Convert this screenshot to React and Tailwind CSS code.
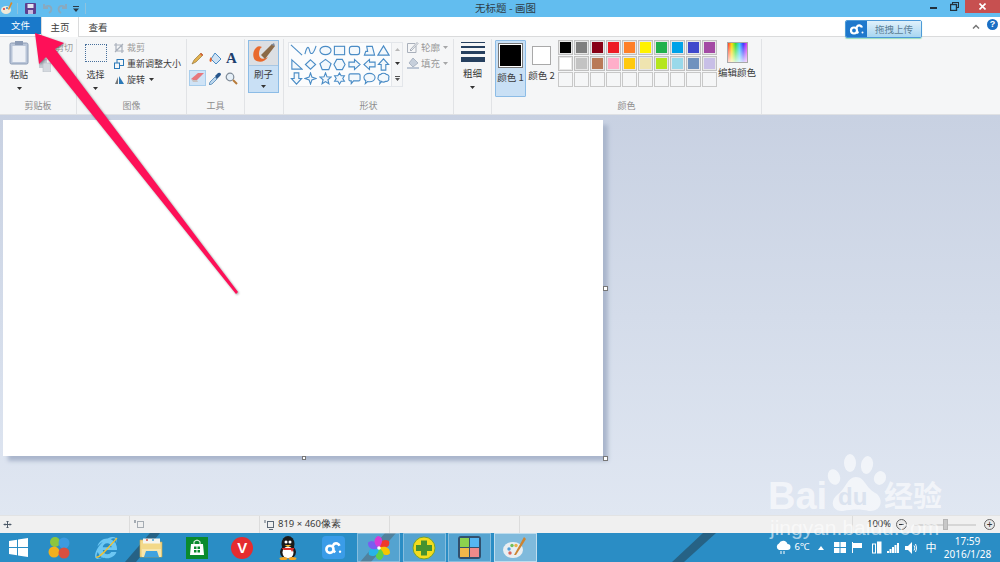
import React from "react";
import { FaInternetExplorer } from "react-icons/fa";

const S = "#4a8cc6";
const shapes = [
  <path d="M1 1L13 12" />,
  <path d="M1 11C3 2 5 2 6 7S10 12 13 2" />,
  <ellipse cx="7" cy="7" rx="6" ry="4.5" />,
  <rect x="1.5" y="2.5" width="11" height="9" />,
  <rect x="1.5" y="2.5" width="11" height="9" rx="2.5" />,
  <path d="M4 2.5H10L12.5 12H1.5L3 8H5Z" />,
  <path d="M7 2L13 12H1Z" />,
  <path d="M2 2L13 12H2Z" />,
  <path d="M7 2L12.5 7L7 12L1.5 7Z" />,
  <path d="M7 1.5L13 6L10.5 12.5H3.5L1 6Z" />,
  <path d="M4 1.5H10L13 7L10 12.5H4L1 7Z" />,
  <path d="M1 4.5H7V1.5L13 7L7 12.5V9.5H1Z" />,
  <path d="M13 4.5H7V1.5L1 7L7 12.5V9.5H13Z" />,
  <path d="M4.5 13V7H1.5L7 1L12.5 7H9.5V13Z" />,
  <path d="M4.5 1V7H1.5L7 13L12.5 7H9.5V1Z" />,
  <path d="M7 1L8.5 5.5L13 7L8.5 8.5L7 13L5.5 8.5L1 7L5.5 5.5Z" />,
  <path d="M7 1L8.6 5.2L13 5.5L9.6 8.3L10.7 12.7L7 10.3L3.3 12.7L4.4 8.3L1 5.5L5.4 5.2Z" />,
  <path d="M7 1L8.8 4H12.3L10.5 7L12.3 10H8.8L7 13L5.2 10H1.7L3.5 7L1.7 4H5.2Z" />,
  <path d="M2.5 2H11.5Q13 2 13 3.5V8Q13 9.5 11.5 9.5H6L3.5 12.5V9.5H2.5Q1 9.5 1 8V3.5Q1 2 2.5 2Z" />,
  <path d="M7 1.5C10.5 1.5 13 3.5 13 6S10.5 10.500 7 10.500Q6 10.500 5 10.300L2.500 12.500L3 9.500C1.800 8.700 1 7.500 1 6C1 3.500 3.500 1.500 7 1.500Z" />,
  <path d="M4 2.500C5 1 9 1 10 2.500C12.500 2.500 13.500 5 12.500 6.500C13.500 9 11 10.500 9.500 10C8 11 6 11 5 10L3 12.500L3.300 9.500C1 9 .500 6.500 1.500 5.500C1 3.500 3 2.500 4 2.500Z" />,
];
const colorsA = ["#000000", "#7f7f7f", "#880015", "#ed1c24", "#ff7f27", "#fff200", "#22b14c", "#00a2e8", "#3f48cc", "#a349a4"];
const colorsB = ["#ffffff", "#c3c3c3", "#b97a57", "#ffaec9", "#ffc90e", "#efe4b0", "#b5e61d", "#99d9ea", "#7092be", "#c8bfe7"];

const Caret = ({ c = "mx-auto" }) => (
  <svg width="5" height="3" viewBox="0 0 5 3" className={c}><path d="M0 0H5L2.500 3Z" fill="#333" /></svg>
);

const Group = ({ w, label, children }) => (
  <div className={`${w} flex flex-col border-r border-[#e1e3e6] shrink-0 h-full`}>
    <div className="flex-1 min-h-0 flex">{children}</div>
    <div className="h-[14px] leading-[14px] text-center text-[9px] text-[#8d8d8d] mb-[1px]">{label}</div>
  </div>
);

const Swatch = ({ c }) => (
  <div className="w-[15px] h-[15px] border border-[#c0c0c0] p-[1px] bg-[#e7e7e7]">
    <div className="w-full h-full" style={{ background: c }} />
  </div>
);

const LinkLogo = ({ size = 16, color = "#fff" }) => (
  <svg width={size} height={size} viewBox="0 0 16 16" fill="none" stroke={color} strokeWidth="2.200">
    <circle cx="5" cy="9.500" r="3" />
    <path d="M7 7.500L8.500 5A3 3 0 0 1 13 6.500" />
    <path d="M7.500 10.500L9.500 12" />
    <circle cx="13.500" cy="11.500" r="1" fill={color} stroke="none" />
  </svg>
);

const Wheel = ({ size = 24 }) => {
  const c = ["#f0392b", "#f7c600", "#5ed04a", "#27b5e8", "#7b5cf0", "#d63bd6"];
  return (
    <svg width={size} height={size} viewBox="-12 -12 24 24">
      {c.map((f, i) => (
        <path key={f} transform={`rotate(${i * 60 + 20})`} d="M0 0C-2 -6 1 -11 7 -10C10 -6 8 -2 0 0Z" fill={f} />
      ))}
      <circle r="1.800" fill="#fff" />
    </svg>
  );
};

const Slot = ({ w = "w-[45.5px]", cls = "", children }) => (
  <div className={`${w} ${cls} h-full shrink-0 flex items-center justify-center`}>
    {children}
  </div>
);

const RUN = "bg-white/20 border border-white/30";

export default function App() {
  return (
    <div className="relative w-[1000px] h-[562px] overflow-hidden flex flex-col bg-white text-[#3b3b3b] font-['Noto_Sans_CJK_SC','Noto_Sans',sans-serif]">
      {/* Title bar */}
      <div className="h-[17px] bg-[#62bdef] flex items-start shrink-0 relative">
        <div className="w-[12px] h-[13px] ml-[1px] mt-[2px]">
          <svg width="12" height="13" viewBox="0 0 12 13"><ellipse cx="5" cy="8" rx="5" ry="4" fill="#efe9d8" /><circle cx="3" cy="7" r="1" fill="#d33" /><circle cx="6" cy="6" r="1" fill="#38c" /><path d="M10 0L11.500 1L8 8L7 7Z" fill="#d98a2a" /></svg>
        </div>
        <div className="w-px h-[11px] bg-[#8fc3de] ml-[4px] mt-[3px]" />
        <svg width="11" height="11" viewBox="0 0 11 11" className="ml-[7px] mt-[3px]"><rect width="11" height="11" rx="1" fill="#5d3f8e" /><rect x="2.500" y="1" width="6" height="4" fill="#e4e4f0" /><rect x="3" y="7" width="5" height="4" fill="#c7b9de" /></svg>
        <svg width="11" height="11" viewBox="0 0 11 11" fill="none" stroke="#8aa9bd" strokeWidth="1.800" className="ml-[6px] mt-[3px]"><path d="M2 1V5H6M2 5C4 2 9 2 9.500 6C9.500 8 8.500 9 7 10" /></svg>
        <svg width="11" height="11" viewBox="0 0 11 11" fill="none" stroke="#8aa9bd" strokeWidth="1.800" className="ml-[4px] mt-[3px]"><path d="M9 1V5H5M9 5C7 2 2 2 1.500 6C1.500 8 2.500 9 4 10" /></svg>
        <svg width="6" height="6" viewBox="0 0 6 6" className="ml-[5px] mt-[6px]"><path d="M0 0H6V1H0ZM0 2.500H6L3 6Z" fill="#2b3a46" /></svg>
        <div className="w-px h-[11px] bg-[#8fc3de] ml-[6px] mt-[3px]" />
        <div className="w-[401px] text-center text-[10.500px] leading-[16px] text-[#2f3c46] ml-[219px]">无标题 - 画图</div>
        <div className="ml-auto flex items-start h-[13px]">
          <div className="w-[7px] h-[2px] bg-[#22313c] mt-[7px] mr-[13px]" />
          <svg width="9" height="9" viewBox="0 0 9 9" fill="none" stroke="#22313c" className="mt-[2px] mr-[6px]"><rect x="2.500" y=".5" width="6" height="5" /><rect x=".5" y="2.500" width="6" height="6" fill="#62bdef" strokeWidth="1.400" /></svg>
          <div className="w-[35px] h-[13px] bg-[#c75050] flex items-center justify-center">
            <svg width="7" height="7" viewBox="0 0 7 7" stroke="#fff" strokeWidth="1.600"><path d="M.5 .5L6.500 6.500M6.500 .5L.5 6.500" /></svg>
          </div>
        </div>
      </div>

      {/* Tabs */}
      <div className="h-[20px] bg-white flex items-start border-b border-[#dadbdc] shrink-0 relative">
        <div className="w-[41px] h-[17px] bg-[#1979ca] text-white text-[9.500px] leading-[17px] text-center">文件</div>
        <div className="w-[38px] h-[20px] border-x border-[#dadbdc] text-[9.500px] leading-[20px] text-center bg-white">主页</div>
        <div className="w-[38px] text-[9.500px] leading-[20px] text-center">查看</div>
        <div className="ml-[728px] mt-[3px] w-[77px] h-[18px] rounded-[2px] border border-[#4d9ad8] flex overflow-hidden relative z-10 shadow-[0_1px_1px_#9db]">
          <div className="w-[21px] bg-[#1e78cc] flex items-center justify-center"><LinkLogo size={16} /></div>
          <div className="flex-1 bg-gradient-to-b from-[#e0f1fb] to-[#a9d6f1] text-[9.500px] leading-[16px] text-center text-[#5c7f96]">拖拽上传</div>
        </div>
        <svg width="8" height="5" viewBox="0 0 8 5" fill="none" stroke="#777" strokeWidth="1.500" className="ml-[50px] mt-[7px]"><path d="M1 4.500L4 1.500L7 4.500" /></svg>
        <div className="ml-[7px] mt-[2px] w-[11px] h-[11px] rounded-full bg-[#1a6fc4] text-white text-[9px] font-bold leading-[11px] text-center font-['Liberation_Sans',sans-serif]">?</div>
      </div>

      {/* Ribbon */}
      <div className="h-[78px] bg-[#f5f6f7] flex shrink-0 text-[9px] pt-[2px] border-b border-[#dfe1e4]">
        <Group w="w-[77px]" label="剪贴板">
          <div className="w-[38px] flex flex-col items-center">
            <svg width="20" height="24" viewBox="0 0 20 24" className="mt-[2px]"><rect x="1" y="2" width="18" height="21" rx="1.500" fill="#b9c5d8" stroke="#8c9cb6" /><rect x="3.500" y="5" width="13" height="16" fill="#eef1f6" /><rect x="6" y="0" width="8" height="4" fill="#8c9cb6" /></svg>
            <div className="mt-[3px] leading-[13px]">粘贴</div>
            <div className="mt-[6px]"><Caret /></div>
          </div>
          <div className="flex flex-col pl-[1px]">
            <div className="text-[#9a9a9a] pl-[16px] pt-[2px] leading-[13px]">剪切</div>
            <svg width="12" height="13" viewBox="0 0 12 13" className="mt-[5px] ml-[0px]"><rect x="0" y="0" width="8" height="9" fill="#c6ccd4" /><rect x="4" y="4" width="8" height="9" fill="#d4d9df" stroke="#b7bec7" strokeWidth=".6" /></svg>
          </div>
        </Group>
        <Group w="w-[110px]" label="图像">
          <div className="w-[37px] flex flex-col items-center">
            <div className="w-[22px] h-[18px] border border-dotted border-[#47709c] mt-[5px]" />
            <div className="mt-[6px] leading-[13px]">选择</div>
            <div className="mt-[6px]"><Caret /></div>
          </div>
          <div className="flex flex-col gap-[3px] pt-[2px] leading-[13px]">
            <div className="flex items-center gap-[3px] text-[#9a9a9a]"><svg width="10" height="10" viewBox="0 0 10 10" fill="none" stroke="#a9b0bb" strokeWidth="1.200"><path d="M2 0V8H10M0 2H8V10M1 9L9 1" /></svg>裁剪</div>
            <div className="flex items-center gap-[3px]"><svg width="10" height="10" viewBox="0 0 10 10" fill="none" stroke="#2b79b8"><rect x="3" y=".5" width="6.500" height="6" /><rect x=".5" y="4" width="5" height="5.500" fill="#f5f6f7" /></svg>重新调整大小</div>
            <div className="flex items-center gap-[3px]"><svg width="10" height="10" viewBox="0 0 10 10"><path d="M1 9L4 2V9Z" fill="#777" /><path d="M5 1L10 9H5Z" fill="#2b79b8" /></svg>旋转<Caret c="ml-[1px]" /></div>
          </div>
        </Group>
        <Group w="w-[58px]" label="工具">
          <div className="grid grid-cols-3 grid-rows-2 w-[51px] h-[40px] ml-[2px] mt-[9px] place-items-center">
            <svg width="13" height="13" viewBox="0 0 13 13"><path d="M1 12L3 8L10 1L12 3L5 10Z" fill="#e2b14e" stroke="#8a6a2f" strokeWidth=".6" /><path d="M10 1L12 3L11 4L9 2Z" fill="#d85a3a" /></svg>
            <svg width="14" height="13" viewBox="0 0 14 13"><path d="M7 1L13 7L8 12L3 7Z" fill="#cfe2f3" stroke="#4a8cc6" /><path d="M3 5C1 7 1 10 3 10C4 9 4 7 3 5Z" fill="#e8632a" /></svg>
            <div className="text-[15px] leading-[15px] font-bold text-[#1d3f6e] font-['Liberation_Serif',serif]">A</div>
            <div className="w-[17px] h-[16px] bg-[#cfe3f6] border border-[#a7cdec] flex items-center justify-center"><svg width="13" height="10" viewBox="0 0 13 10"><path d="M0 6L7 0H13L6 7H2Z" fill="#e7777d" /><path d="M0 6L2 9H7L6 7H2Z" fill="#c9c2c2" /></svg></div>
            <svg width="12" height="13" viewBox="0 0 12 13"><path d="M0 13L1 10L6 5L8 7L3 12Z" fill="#bcd7ee" stroke="#3f78ad" strokeWidth=".7" /><path d="M6 4L9 1Q11 0 12 2Q12 3 11 4L8 7Z" fill="#27568c" /></svg>
            <svg width="13" height="13" viewBox="0 0 13 13" fill="none"><circle cx="5" cy="5" r="3.800" stroke="#7f8b98" strokeWidth="1.200" fill="#e6f0f8" /><path d="M8 8L12 12" stroke="#b77b3a" strokeWidth="2" /></svg>
          </div>
        </Group>
        <div className="w-[39px] border-r border-[#e1e3e6] shrink-0 h-full pl-[3px] pt-[1px]">
          <div className="w-[31px] h-[53px] border border-[#8cbce6] bg-[#c9e0f5] flex flex-col items-center">
            <div className="w-[29px] h-[25px] bg-[#dcdfe3] border-b border-[#a9c7e2] flex items-center justify-center">
              <svg width="25" height="22" viewBox="0 0 25 22"><path d="M6 5C2 8 1 14 4 18C8 21 14 20 17 15C12 18 8 17 8 12C8 9 9 6 11 5C9 4 7 4 6 5Z" fill="#e9692c" /><path d="M10 13L21 2L24 4L14 17Z" fill="#8b6a47" /><path d="M20 3L23 1L24 4Z" fill="#7d8ba0" /></svg>
            </div>
            <div className="leading-[13px] mt-[2px] text-[9.500px]">刷子</div>
            <div className="mt-[4px]"><Caret /></div>
          </div>
        </div>
        <Group w="w-[170px]" label="形状">
          <div className="flex ml-[4px] mt-[3px] h-[45px]">
            <div className="w-[104px] bg-[#fbfcfd] border border-[#e3e6ea] grid grid-cols-7 grid-rows-3 place-items-center">
              {shapes.map((s, i) => (
                <svg key={i} width="13" height="13" viewBox="0 0 14 14" fill="#f3f8fc" stroke={S} strokeWidth="1.200">{s}</svg>
              ))}
            </div>
            <div className="w-[11px] border-y border-r border-[#e3e6ea] flex flex-col items-center justify-around">
              <svg width="5" height="3" viewBox="0 0 5 3"><path d="M0 3H5L2.500 0Z" fill="#b9b9b9" /></svg>
              <Caret />
              <svg width="5" height="5" viewBox="0 0 5 5"><path d="M0 0H5V1H0ZM0 2H5L2.500 5Z" fill="#555" /></svg>
            </div>
          </div>
          <div className="flex flex-col gap-[2px] ml-[4px] mt-[1px] text-[#9a9a9a] leading-[14px] text-[9.500px]">
            <div className="flex items-center gap-[2px]"><svg width="12" height="12" viewBox="0 0 12 12" fill="none" stroke="#a9b0bb"><path d="M.5 2.500H8M.5 2.500V11.500H9V5M3 9L10 1.500L11 2.500L4 10Z" /></svg>轮廓<Caret c="ml-[1px] opacity-40" /></div>
            <div className="flex items-center gap-[2px]"><svg width="12" height="12" viewBox="0 0 12 12"><path d="M6 1L11 6L6 10L2 6Z" fill="#c6cfdb" stroke="#98a4b4" strokeWidth=".7" /><rect y="10" width="12" height="2" fill="#bcc6d4" /></svg>填充<Caret c="ml-[1px] opacity-40" /></div>
          </div>
        </Group>
        <Group w="w-[38px]" label="">
          <div className="w-full flex flex-col items-center pt-[3px]">
            <div className="w-[24px] h-[1px] bg-[#26405f]" />
            <div className="w-[24px] h-[2px] bg-[#26405f] mt-[3px]" />
            <div className="w-[24px] h-[3px] bg-[#26405f] mt-[3px]" />
            <div className="w-[24px] h-[5px] bg-[#26405f] mt-[3px]" />
            <div className="leading-[13px] mt-[5px] text-[9.500px]">粗细</div>
            <div className="mt-[6px]"><Caret /></div>
          </div>
        </Group>
        <Group w="w-[270px]" label="颜色">
          <div className="w-[31px] h-[57px] ml-[3px] mt-[1px] bg-[#c9e0f5] border border-[#8cbce6] rounded-[1px] flex flex-col items-center pt-[2px] shrink-0">
            <div className="w-[25px] h-[25px] border border-[#777] p-[1px] bg-white"><div className="w-full h-full bg-black" /></div>
            <div className="whitespace-nowrap leading-[13px] mt-[3px] text-[9.500px]">颜色 1</div>
          </div>
          <div className="w-[31px] flex flex-col items-center pt-[7px] shrink-0">
            <div className="w-[19px] h-[19px] border border-[#a9a9a9] bg-white" />
            <div className="whitespace-nowrap leading-[13px] mt-[4px] text-[9.500px]">颜色 2</div>
          </div>
          <div className="grid grid-cols-[repeat(10,15px)] auto-rows-[15px] gap-[1px] mt-[1px] ml-[1px] shrink-0">
            {colorsA.map((c) => <Swatch key={c} c={c} />)}
            {colorsB.map((c) => <Swatch key={c} c={c} />)}
            {Array.from({ length: 10 }).map((_, i) => (
              <div key={i} className="w-[15px] h-[15px] border border-[#c8c8c8] bg-[#f5f6f7]" />
            ))}
          </div>
          <div className="flex-1 flex flex-col items-center pt-[3px] pr-[4px]">
            <div className="w-[21px] h-[21px] border border-[#a9a9a9] bg-[linear-gradient(to_bottom,transparent,#ffffffcc),linear-gradient(to_right,#f33,#fd0,#3d3,#3cf,#33f,#e3e)]" />
            <div className="whitespace-nowrap leading-[13px] mt-[3px] text-[9.500px]">编辑颜色</div>
          </div>
        </Group>
      </div>

      {/* Canvas area */}
      <div className="flex-1 min-h-0 bg-gradient-to-b from-[#c8d1e2] to-[#e0e7f2] pl-[3px] pt-[5px] relative">
        <div className="relative w-[600px] h-[336px] bg-white shadow-[5px_5px_4px_#aab6cc]">
          <div className="absolute left-[600px] top-[166px] w-[5px] h-[5px] border border-[#777] bg-white" />
          <div className="absolute left-[299px] top-[336px] w-[4px] h-[4px] border border-[#777] bg-white" />
          <div className="absolute left-[600px] top-[336px] w-[5px] h-[5px] border border-[#777] bg-white" />
        </div>
      </div>

      {/* Status bar */}
      <div className="h-[18px] bg-[#f0f0f0] border-t border-[#e2e3e4] flex items-center shrink-0 text-[9.500px] font-['Noto_Sans',sans-serif]">
        <div className="w-[130px] h-full border-r border-[#dcdcdc] pl-[3px] flex items-center"><svg width="9" height="9" viewBox="0 0 9 9" fill="none" stroke="#4d5a68"><path d="M4.500 1V8M1 4.500H8M3.500 2L4.500 1L5.500 2M3.500 7L4.500 8L5.500 7M2 3.500L1 4.500L2 5.500M7 3.500L8 4.500L7 5.500" /></svg></div>
        <div className="w-[130px] h-full border-r border-[#dcdcdc] pl-[4px] flex items-center"><svg width="11" height="10" viewBox="0 0 11 10" fill="none" stroke="#5b6876"><path d="M1 0V3" /><rect x="3.500" y="1.500" width="6" height="6" strokeDasharray="1 1" /></svg></div>
        <div className="w-[130px] h-full border-r border-[#dcdcdc] pl-[4px] flex items-center gap-[3px] whitespace-nowrap"><svg width="11" height="10" viewBox="0 0 11 10" fill="none" stroke="#5b6876"><path d="M1 0V3" /><rect x="3.500" y="1.500" width="6" height="6" /><path d="M5 9.500H9" /></svg>819 × 460像素</div>
        <div className="w-[130px] h-full border-r border-[#dcdcdc]" />
        <div className="w-[333px] h-full border-r border-[#dcdcdc]" />
        <div className="flex items-center flex-1 relative">
          <span className="ml-[14px] w-[24px] text-[9.500px] text-[#333]">100%</span>
          <div className="w-[11px] h-[11px] rounded-full border border-[#666] bg-[#e8e8e8] ml-[5px] flex items-center justify-center"><div className="w-[5px] h-px bg-[#333]" /></div>
          <div className="relative w-[62px] h-[2px] bg-[#d6d6d6] ml-[7px]">
            <div className="absolute left-[29px] -top-[5px] w-[5px] h-[11px] bg-[#c7c7c7] border border-[#b5b5b5]" />
          </div>
          <div className="w-[11px] h-[11px] rounded-full border border-[#666] bg-[#e8e8e8] ml-[8px] flex items-center justify-center text-[10px] leading-[9px] text-[#333]">+</div>
        </div>
      </div>

      {/* Taskbar */}
      <div className="h-[29px] bg-[#2a8dc5] flex items-center shrink-0 relative overflow-hidden">
        <svg width="1000" height="29" viewBox="0 0 1000 29" className="absolute left-0 top-0"><path d="M125 29L150 0H160L136 29ZM360 29L385 0H396L371 29ZM672 29L703 0H716L684 29Z" fill="#26546f" opacity=".75" /></svg>
        <div className="relative flex items-center h-full w-full">
          <Slot w="w-[36px]"><svg width="19" height="19" viewBox="0 0 19 19" fill="#fff"><path d="M0 3L8 1.800V9H0ZM9 1.600L19 0V9H9ZM0 10H8V17.200L0 16ZM9 10H19V19L9 17.400Z" /></svg></Slot>
          <Slot w="w-[45px] mr-[2px]"><svg width="24" height="24" viewBox="0 0 24 24"><circle cx="8" cy="6" r="5" fill="#8cc63e" /><circle cx="17" cy="7" r="5.500" fill="#3c9be0" /><circle cx="7" cy="16" r="5.500" fill="#f2b01e" /><circle cx="17" cy="17" r="5.500" fill="#d9503f" /></svg></Slot>
          <Slot><div className="relative w-[24px] h-[24px] flex items-center justify-center"><FaInternetExplorer size={22} color="#6dc7f3" /><svg width="26" height="26" viewBox="0 0 26 26" fill="none" className="absolute -left-[1px] -top-[1px]"><path d="M3 22C6 24 14 14 24 3" stroke="#f2c12e" strokeWidth="1.200" /></svg></div></Slot>
          <Slot><svg width="25" height="22" viewBox="0 0 25 22"><path d="M1 3H10L12 5H23V20H1Z" fill="#f3d98a" stroke="#c9a851" strokeWidth=".6" /><rect x="4" y="1.500" width="17" height="5" fill="#f5f5ef" /><circle cx="8" cy="3" r="1" fill="#d9503f" /><circle cx="14" cy="3" r="1" fill="#4aa4dd" /><path d="M3 12H22V20H3Z" fill="#f7e6ac" /><path d="M7 14H18L20 20H5Z" fill="#3fa2df" /></svg></Slot>
          <Slot><svg width="22" height="22" viewBox="0 0 22 22"><rect width="22" height="22" fill="#0a8a2d" /><path d="M5 7H17L18 18H4Z" fill="#fff" /><path d="M8 7V4.500Q11 1.500 14 4.500V7" fill="none" stroke="#fff" /><path d="M8 9.500H10.500V12H8ZM11.500 9.500H14V12H11.500ZM8 13H10.500V15.500H8ZM11.500 13H14V15.500H11.500Z" fill="#0a8a2d" /></svg></Slot>
          <Slot><div className="w-[22px] h-[22px] rounded-full bg-[#e52c2f] text-white text-[15px] font-bold leading-[22px] text-center font-['Liberation_Sans',sans-serif]">V</div></Slot>
          <Slot><svg width="20" height="24" viewBox="0 0 20 24"><ellipse cx="10" cy="8" rx="6.500" ry="8" fill="#1a1a1a" /><ellipse cx="10" cy="16" rx="8" ry="7" fill="#1a1a1a" /><ellipse cx="10" cy="16.500" rx="5.500" ry="6" fill="#fff" /><circle cx="8" cy="6" r="1.500" fill="#fff" /><circle cx="12" cy="6" r="1.500" fill="#fff" /><path d="M6.500 9H13.500L10 11Z" fill="#f5b82a" /><path d="M3.500 12H16.500L14 16L13 14H6Z" fill="#dc2d2a" /><ellipse cx="5.500" cy="22.500" rx="4" ry="1.500" fill="#f5a623" /><ellipse cx="14.500" cy="22.500" rx="4" ry="1.500" fill="#f5a623" /></svg></Slot>
          <Slot><div className="w-[23px] h-[23px] rounded-[4px] bg-[#3a9ce8] flex items-center justify-center"><LinkLogo size={19} /></div></Slot>
          <Slot w="w-[43px]" cls={`ml-[1px] mr-[1.500px] ${RUN}`}><Wheel /></Slot>
          <Slot w="w-[43px]" cls={`ml-[1px] mr-[1.500px] ${RUN}`}><svg width="24" height="24" viewBox="0 0 24 24"><circle cx="12" cy="12" r="11" fill="#f4dc1d" stroke="#77a32c" /><path d="M9 4.500H15V9H20V15H15V19.500H9V15H4V9H9Z" fill="#46922f" /></svg></Slot>
          <Slot w="w-[43px]" cls={`ml-[1px] mr-[1.500px] ${RUN}`}><svg width="23" height="23" viewBox="0 0 23 23"><rect width="23" height="23" rx="3" fill="#31506e" /><rect x="2" y="2" width="9" height="9" fill="#8cd14e" /><rect x="12" y="2" width="9" height="9" fill="#54b6f2" /><rect x="2" y="12" width="9" height="9" fill="#f2b84a" /><rect x="12" y="12" width="9" height="9" fill="#ef8a8a" /></svg></Slot>
          <Slot w="w-[43px]" cls="ml-[1px] bg-white/40 border border-white/50"><svg width="24" height="24" viewBox="0 0 24 24"><ellipse cx="10" cy="14" rx="10" ry="8" fill="#e9eef1" /><circle cx="6" cy="13" r="1.700" fill="#4f9ed8" /><circle cx="9" cy="9.500" r="1.700" fill="#6fbf5a" /><circle cx="13" cy="9.500" r="1.700" fill="#e6b34a" /><circle cx="7" cy="17" r="1.700" fill="#d9635a" /><path d="M21 1L23 3L13 19L11 19Z" fill="#cc8432" /></svg></Slot>
          <div className="ml-[238px] flex items-center h-full text-white text-[9.500px] font-['Noto_Sans',sans-serif]">
            <svg width="16" height="15" viewBox="0 0 16 15" fill="#fff"><path d="M4 10A3.500 3.500 0 0 1 4 3.500A4.500 4.500 0 0 1 12.500 4A3 3 0 0 1 12.500 10Z" /><path d="M6 11V14M9 11V14" stroke="#fff" /></svg>
            <span className="ml-[4px] w-[20px] whitespace-nowrap">6℃</span>
            <svg width="6" height="4" viewBox="0 0 6 4" className="ml-[3px]"><path d="M0 4H6L3 0Z" fill="#fff" /></svg>
            <svg width="12" height="11" viewBox="0 0 12 11" fill="#fff" className="ml-[10px]"><path d="M0 0H5.500V5H0ZM6.500 0H12V5H6.500ZM0 6H5.500V11H0ZM6.500 6H12V11H6.500Z" /></svg>
            <svg width="11" height="11" viewBox="0 0 11 11" fill="#fff" className="ml-[5px]"><path d="M1 0V11H2V6H11V1H2V0Z" /></svg>
            <svg width="11" height="13" viewBox="0 0 11 13" fill="none" stroke="#fff" className="ml-[9px]"><rect x="1.500" y="3" width="3" height="9" /><rect x="6.500" y="1" width="3.500" height="11" fill="#fff" /></svg>
            <svg width="12" height="10" viewBox="0 0 12 10" fill="#fff" className="ml-[5px]"><path d="M0 8H2V10H0ZM2.500 6H4.500V10H2.500ZM5 4H7V10H5ZM7.500 2H9.500V10H7.500ZM10 0H12V10H10Z" /></svg>
            <svg width="12" height="12" viewBox="0 0 12 12" fill="#fff" className="ml-[6px]"><path d="M0 4H3L7 0V12L3 8H0Z" /><path d="M9 3.500Q11 6 9 8.500M10.500 2Q13 6 10.500 10" fill="none" stroke="#fff" /></svg>
            <span className="ml-[9px] text-[11px] font-['Noto_Sans_CJK_SC',sans-serif]">中</span>
            <div className="ml-[5px] w-[52px] flex flex-col items-center leading-[13px] whitespace-nowrap text-[10px]"><span>17:59</span><span>2016/1/28</span></div>
          </div>
        </div>
      </div>

      {/* Annotation arrow */}
      <svg width="1000" height="562" viewBox="0 0 1000 562" className="absolute left-0 top-0 pointer-events-none">
        <path d="M35 33L64 43L55 49L238 292L236 294L46 57L39 64Z" fill="#fe1058" className="drop-shadow-[1px_1px_1px_#00000066]" />
      </svg>

      {/* Watermark */}
      <div className="absolute left-[768px] top-[452px] w-[232px] h-[100px] pointer-events-none font-['Liberation_Sans',sans-serif] text-white/60">
        <svg width="66" height="62" viewBox="0 0 66 62" fill="#fff" fillOpacity=".6" className="absolute left-[57px] top-0">
          <ellipse cx="9" cy="25" rx="6" ry="8" transform="rotate(-20 9 25)" />
          <ellipse cx="25" cy="11" rx="6" ry="9" />
          <ellipse cx="42" cy="13" rx="6" ry="9" transform="rotate(10 42 13)" />
          <ellipse cx="55" cy="26" rx="6" ry="7" transform="rotate(20 55 26)" />
          <path d="M31 25C40 25 40 36 52 42C60 50 54 60 44 59C36 57 28 57 18 59C8 60 4 50 12 43C21 37 22 25 31 25Z" />
        </svg>
        <div className="absolute left-0 top-[23px] text-[38px] leading-[42px] font-bold">Bai</div>
        <div className="absolute left-[70px] top-[32px] text-[24px] leading-[26px] font-bold text-[#dbe3ef]">du</div>
        <div className="absolute left-[116px] top-[25px] text-[29px] leading-[34px] font-bold whitespace-nowrap font-['Noto_Sans_CJK_SC',sans-serif]">经验</div>
        <div className="absolute left-[2px] top-[63px] text-[21px] leading-[26px] whitespace-nowrap">jingyan.baidu.com</div>
      </div>
    </div>
  );
}
